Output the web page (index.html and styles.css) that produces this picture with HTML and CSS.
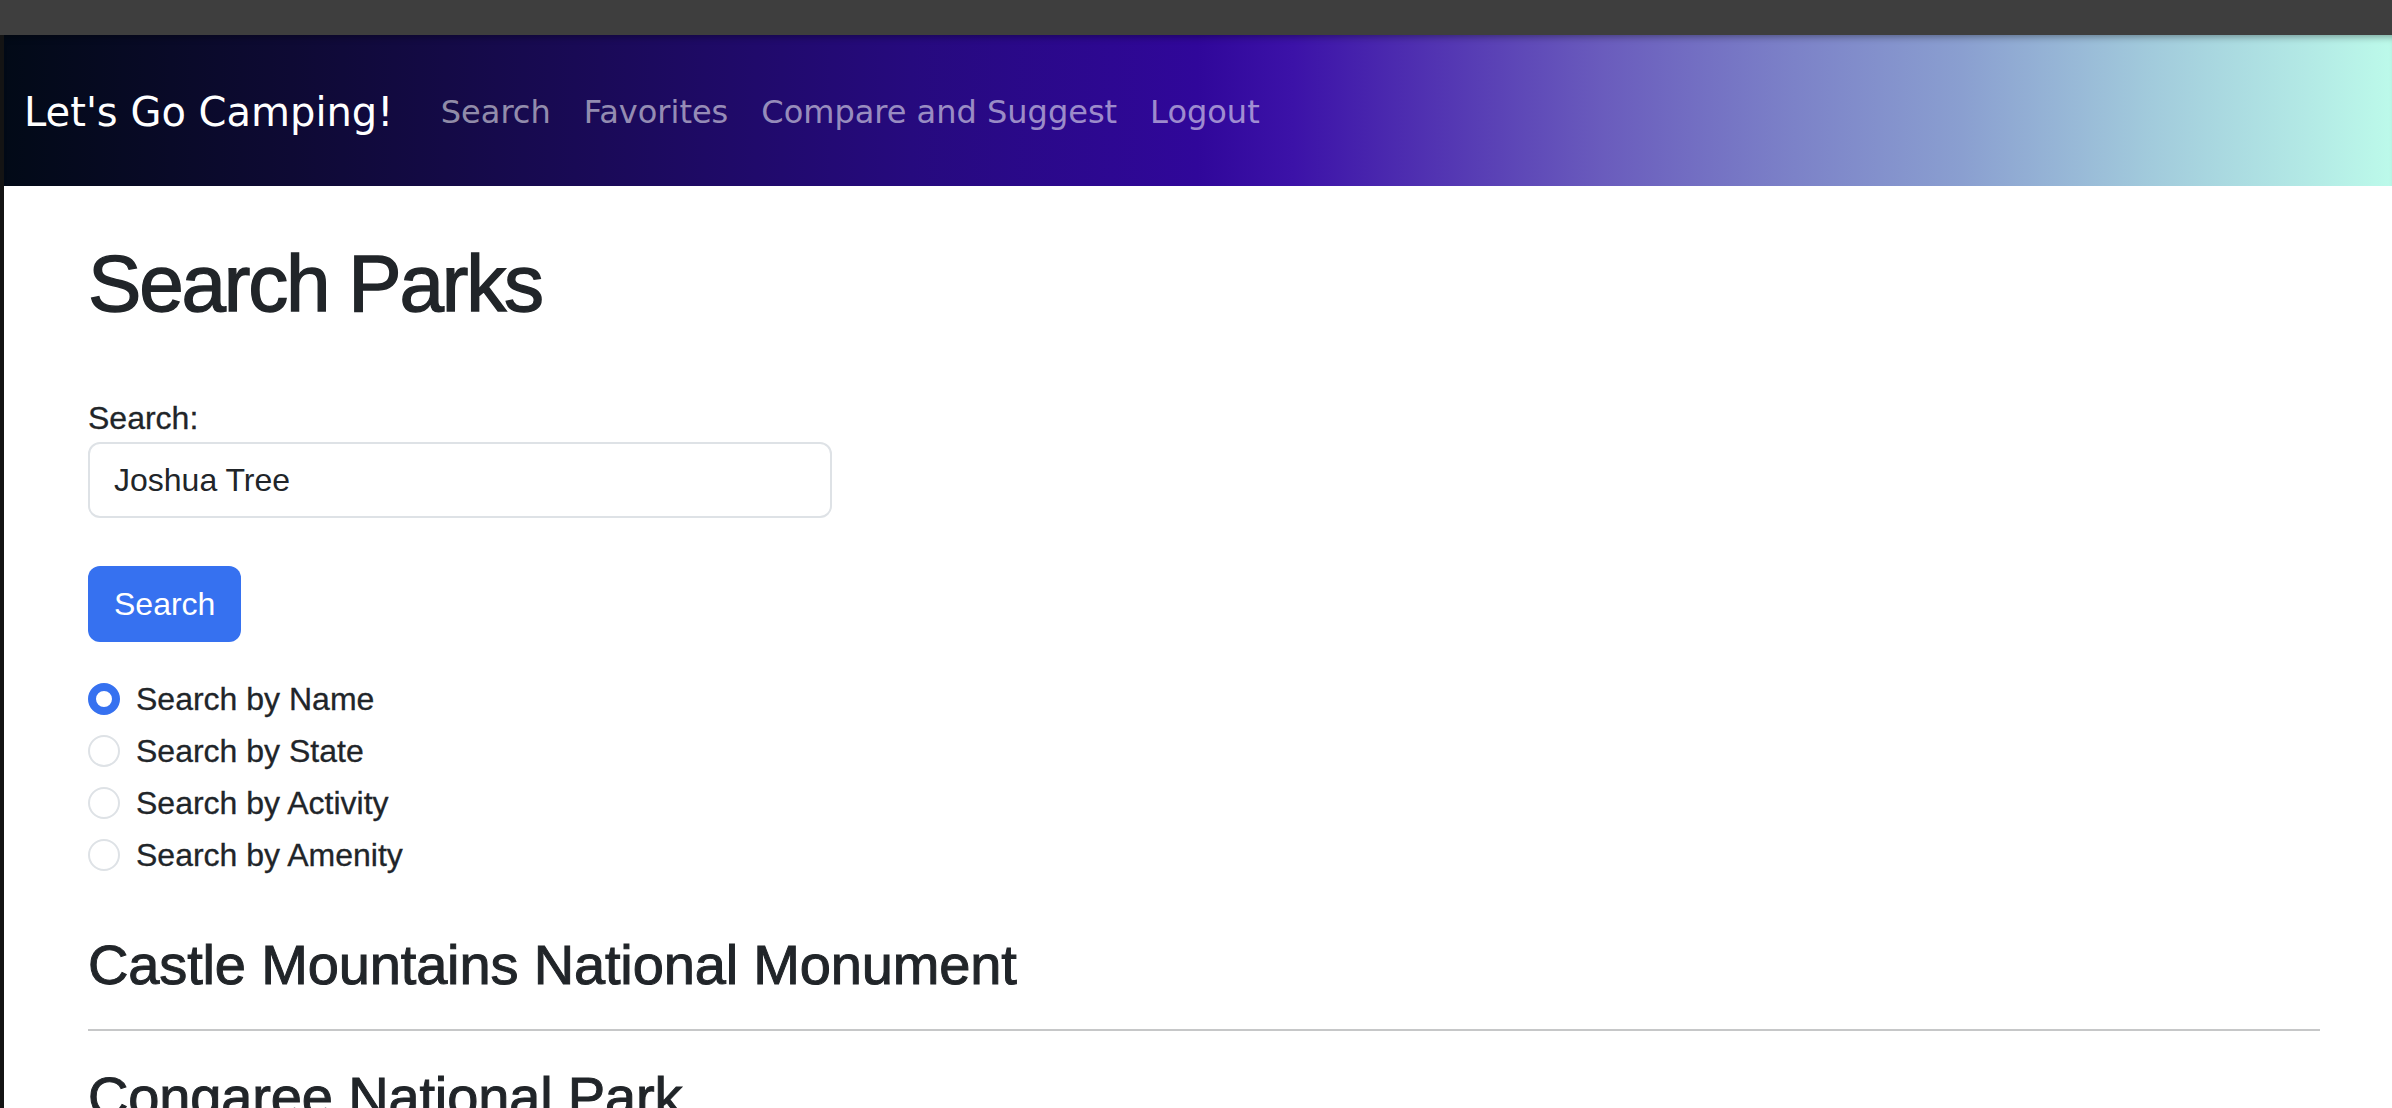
FILE: index.html
```html
<!DOCTYPE html>
<html lang="en">
<head>
<meta charset="utf-8">
<title>Let's Go Camping!</title>
<link rel="stylesheet" href="styles.css">
</head>
<body>
<div class="chrome"></div>
<div class="window">
  <div class="edge"></div>
  <div class="page">
    <nav class="navbar">
      <a class="brand" href="#">Let's Go Camping!</a>
      <ul class="nav-links">
        <li><a class="nav-link" href="#">Search</a></li>
        <li><a class="nav-link" href="#">Favorites</a></li>
        <li><a class="nav-link" href="#">Compare and Suggest</a></li>
        <li><a class="nav-link" href="#">Logout</a></li>
      </ul>
    </nav>
    <main class="content">
      <h1 class="title">Search Parks</h1>
      <form class="search-form">
        <label class="field-label" for="q">Search:</label>
        <input class="field-input" id="q" type="text" value="Joshua Tree">
        <button class="btn-primary" type="button">Search</button>
        <div class="radio-group">
          <label class="radio-row"><input class="radio" type="radio" name="mode" checked><span>Search by Name</span></label>
          <label class="radio-row"><input class="radio" type="radio" name="mode"><span>Search by State</span></label>
          <label class="radio-row"><input class="radio" type="radio" name="mode"><span>Search by Activity</span></label>
          <label class="radio-row"><input class="radio" type="radio" name="mode"><span>Search by Amenity</span></label>
        </div>
      </form>
      <section class="results">
        <h3 class="park-name">Castle Mountains National Monument</h3>
        <hr class="divider">
        <h3 class="park-name">Congaree National Park</h3>
        <hr class="divider">
      </section>
    </main>
  </div>
</div>
</body>
</html>
```
FILE: styles.css
```css
* { box-sizing: border-box; }

html, body {
  margin: 0;
  padding: 0;
  height: 100%;
  overflow: hidden;
  background: #ffffff;
}

body {
  font-family: "Liberation Sans", Arial, sans-serif;
  color: #212529;
}

.chrome {
  height: 35px;
  background: #3e3e3e;
}

.window {
  display: flex;
  height: 1073px;
}

.edge {
  width: 4px;
  flex: none;
  background: #141414;
}

.page {
  flex: 1;
  min-width: 0;
  background: #ffffff;
  overflow: hidden;
}

.navbar {
  height: 151px;
  display: flex;
  align-items: center;
  padding: 3px 0 0 20px;
  background: linear-gradient(90deg,
    #020a17 0%,
    #0e0a34 12%,
    #1a0a58 25%,
    #260a7e 38%,
    #30079a 50%,
    #3c12a8 54%,
    #5234b2 60%,
    #6a5cbd 67%,
    #7c82c8 75%,
    #8a9fd0 82%,
    #a2cbdc 90%,
    #bcfaea 100%);
  box-shadow: inset 0 7px 7px -5px rgba(0, 0, 0, 0.35);
  font-family: "DejaVu Sans", Verdana, sans-serif;
}

.brand {
  font-size: 40px;
  line-height: 60px;
  color: #ffffff;
  text-decoration: none;
  margin-right: 31px;
}

.nav-links {
  display: flex;
  list-style: none;
  margin: 0;
  padding: 0;
}

.nav-link {
  display: block;
  font-size: 32px;
  line-height: 48px;
  padding: 0 16.5px;
  color: rgba(255, 255, 255, 0.55);
  text-decoration: none;
}

.content {
  padding: 50px 72px 0 84px;
}

.title {
  margin: 0 0 62px;
  font-size: 80px;
  line-height: 96px;
  font-weight: 500;
  letter-spacing: -2.2px;
  -webkit-text-stroke: 1.4px #212529;
}

.search-form {
  margin: 0;
}

.field-label {
  display: block;
  font-size: 32px;
  line-height: 48px;
  -webkit-text-stroke: 0.3px #212529;
}

.field-input {
  display: block;
  width: 744px;
  height: 76px;
  margin: 0;
  padding: 0 24px;
  border: 2px solid #dee2e6;
  border-radius: 12px;
  font-family: inherit;
  font-size: 32px;
  color: #212529;
  background: #ffffff;
  outline: none;
}

.btn-primary {
  display: block;
  margin-top: 48px;
  height: 76px;
  padding: 0 26px;
  border: 0;
  border-radius: 12px;
  background: #3671f0;
  color: #ffffff;
  font-family: inherit;
  font-size: 32px;
}

.radio-group {
  margin-top: 33px;
}

.radio-row {
  display: flex;
  align-items: flex-start;
  gap: 16px;
  min-height: 48px;
  margin-bottom: 4px;
  font-size: 32px;
  line-height: 48px;
  -webkit-text-stroke: 0.3px #212529;
}

.radio {
  -webkit-appearance: none;
  appearance: none;
  flex: none;
  width: 32px;
  height: 32px;
  margin: 8px 0 0;
  border: 2px solid #dee2e6;
  border-radius: 50%;
  background: #ffffff;
}

.radio:checked {
  border: 8px solid #3671f0;
  background: #ffffff;
}

.park-name {
  margin: 52px 0 0;
  font-size: 56px;
  line-height: 67px;
  font-weight: 500;
  letter-spacing: -0.15px;
  -webkit-text-stroke: 1px #212529;
}

.divider {
  margin: 31px 0 0;
  height: 2px;
  border: 0;
  background: #c6c7c8;
}

.divider + .park-name {
  margin-top: 32px;
}
```
